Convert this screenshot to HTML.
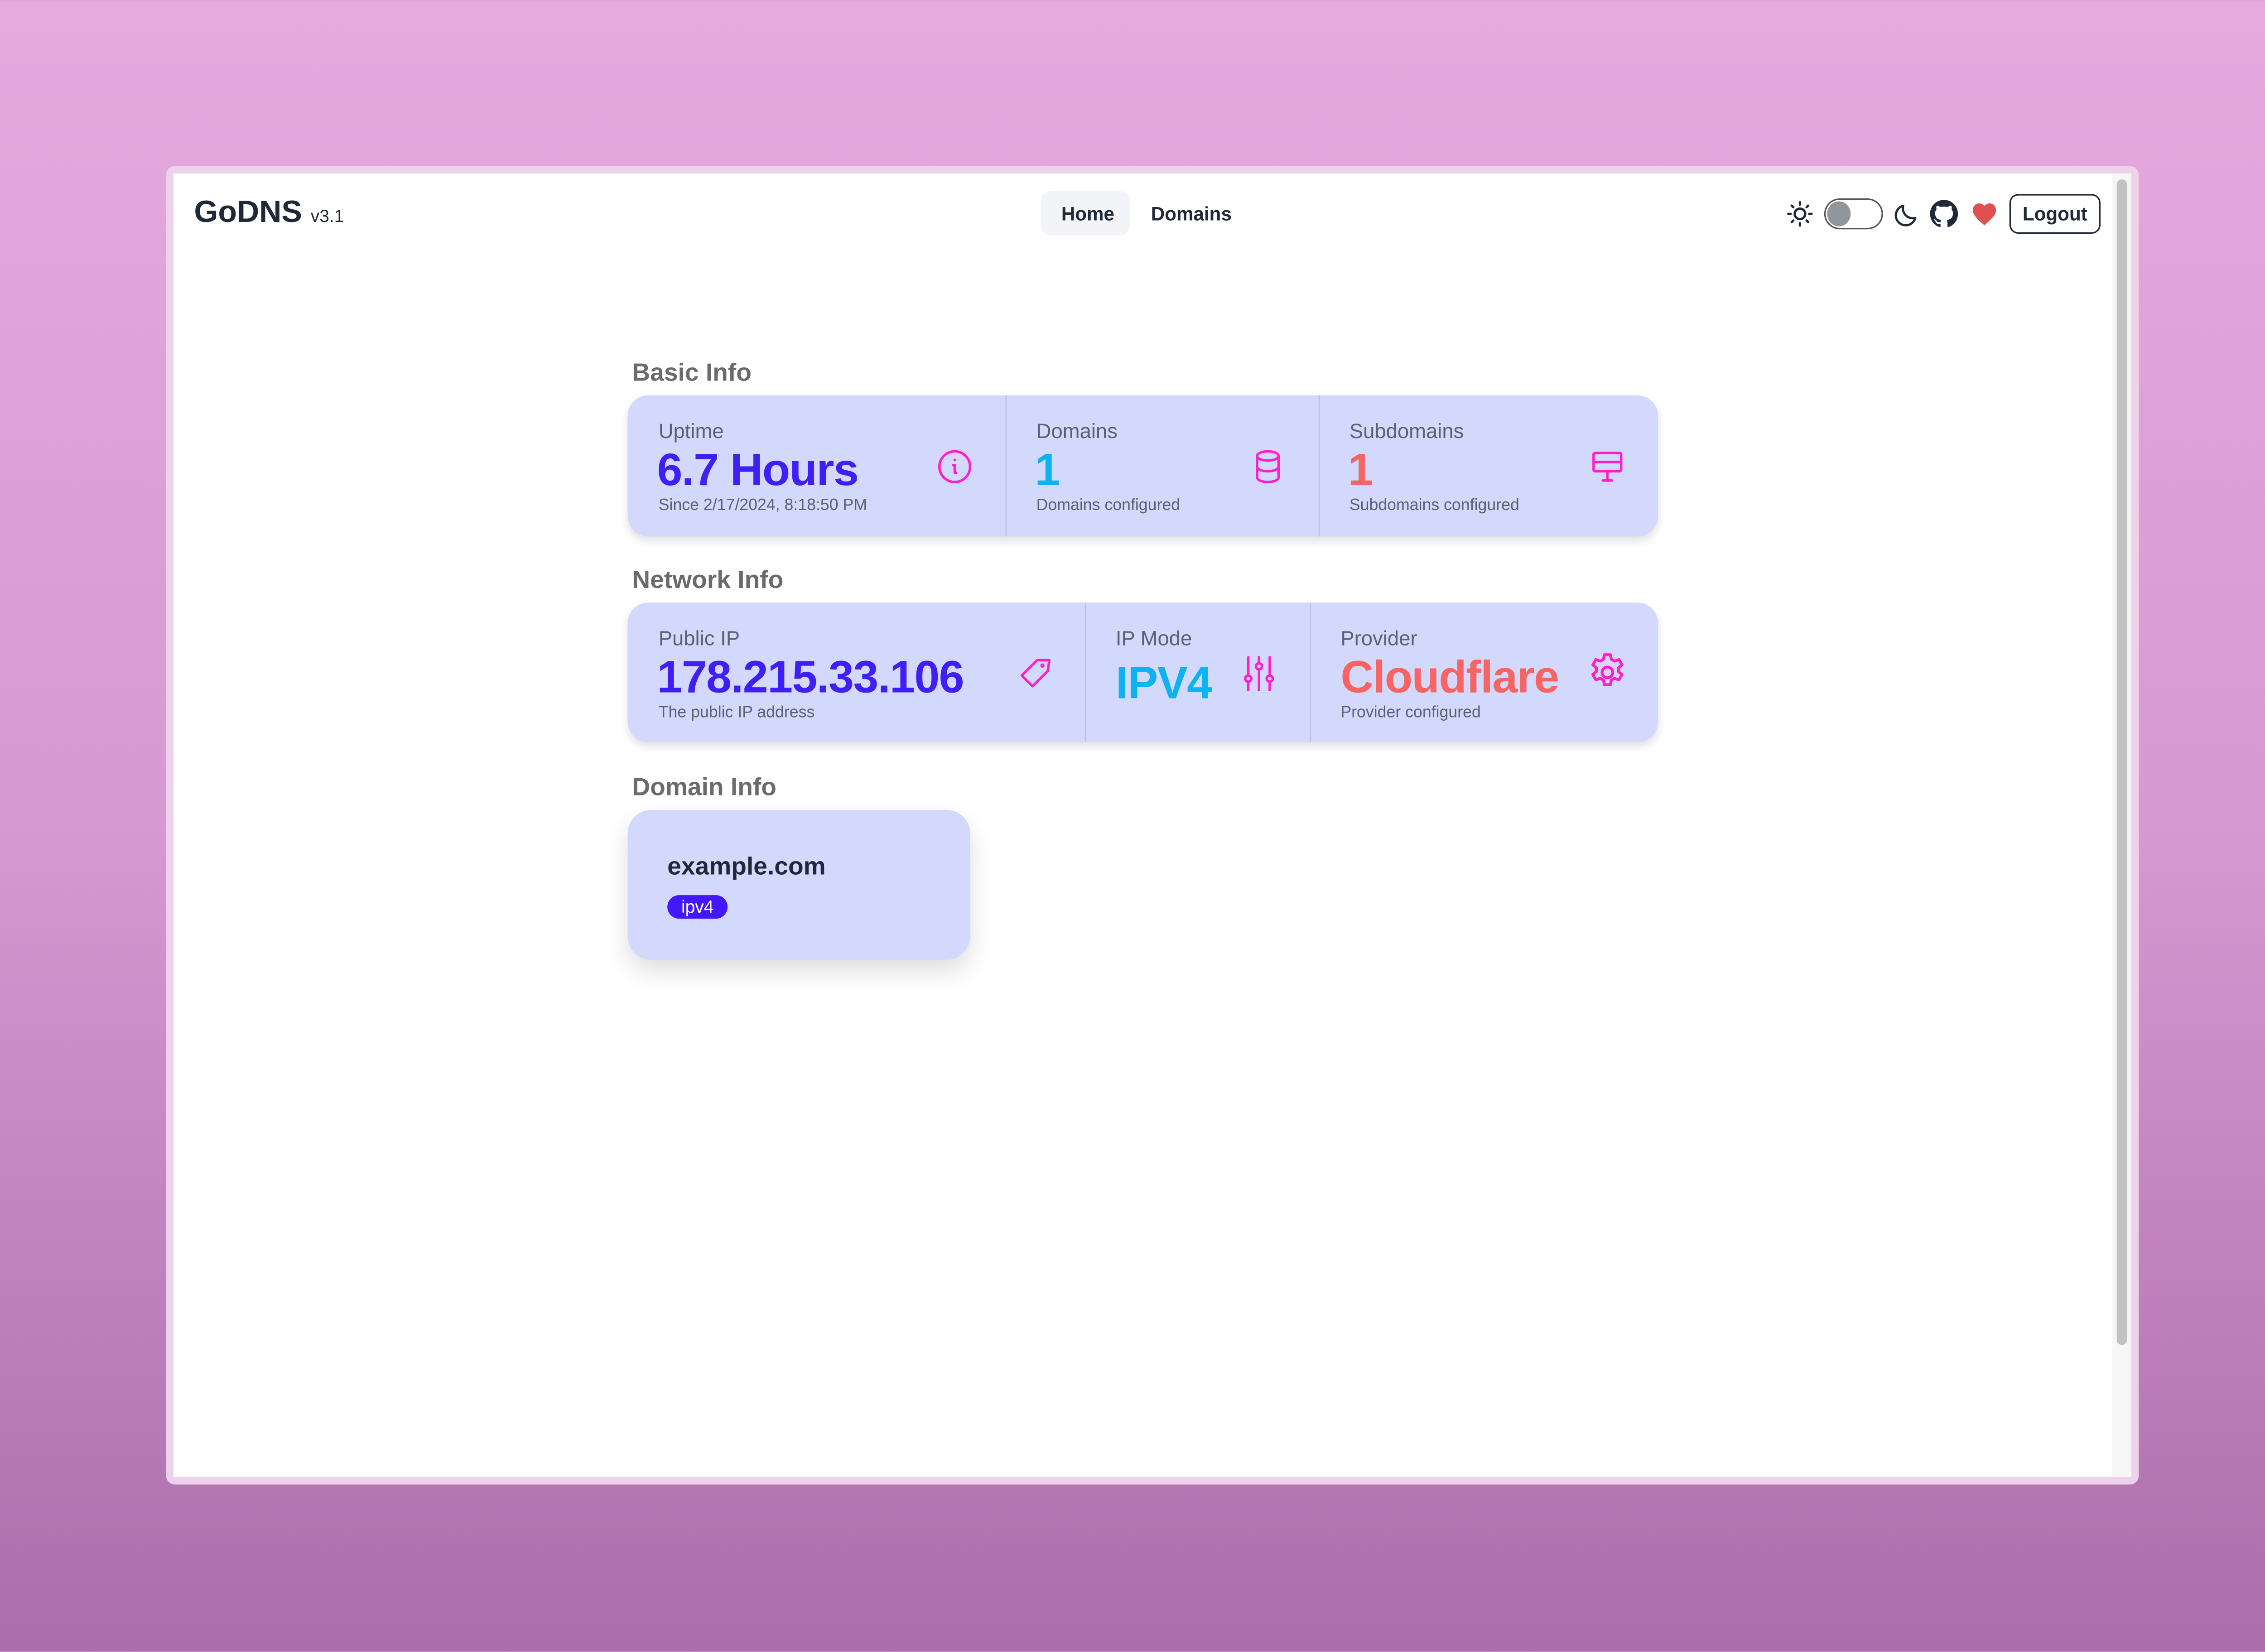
<!DOCTYPE html>
<html><head><meta charset="utf-8"><style>
html,body{margin:0;padding:0;width:5088px;height:3646px;overflow:hidden;}
body{background:linear-gradient(180deg,#e6aadf 0%,#d699d1 50%,#ad6dad 100%);font-family:"Liberation Sans",sans-serif;}
#s{position:absolute;left:0;top:0;width:1568px;height:1124px;transform:scale(3.2449);transform-origin:0 0;}
.frame{position:absolute;left:113px;top:113px;width:1342px;height:897px;background:#ecd2ea;border-radius:6px;}
.win{position:absolute;left:118px;top:118px;width:1319px;height:887px;background:#fff;}
.sb{position:absolute;left:1437px;top:118px;width:13px;height:887px;background:#f6f6f6;}
.thumb{position:absolute;left:1440px;top:122px;width:7px;height:793px;background:#c2c2c2;border-radius:4px;}
.a{position:absolute;}
.lbl{position:absolute;font-size:17px;font-weight:bold;color:#6b6b6b;}
.card{position:absolute;background:#d3d9fd;border-radius:14px;box-shadow:0 3px 6px rgba(0,0,0,.12);}
.div{position:absolute;top:0;bottom:0;width:1px;background:#bfc5e6;}
.t{position:absolute;font-size:14px;color:#5c6170;}
.v{position:absolute;font-size:31px;font-weight:bold;letter-spacing:-0.5px;}
.d{position:absolute;font-size:11px;color:#5c6170;}
svg.ic{position:absolute;fill:none;stroke:#ff1fc8;stroke-width:1.6;stroke-linecap:round;stroke-linejoin:round;}
</style></head><body><div id="s">
<div class="frame"></div><div class="win"></div><div class="sb"></div><div class="thumb"></div>

<div class="a" style="left:132px;top:133px;font-size:21px;font-weight:bold;color:#1f2937;">GoDNS <span style="font-size:12px;font-weight:normal;">v3.1</span></div>
<div class="a" style="left:708px;top:130px;width:61px;height:30px;background:#f2f4f8;border-radius:7px;"></div>
<div class="a" style="left:722px;top:138px;font-size:13px;font-weight:bold;color:#1f2937;">Home</div>
<div class="a" style="left:783px;top:138px;font-size:13px;font-weight:bold;color:#1f2937;">Domains</div>

<svg class="a" style="left:1215px;top:136px" width="19" height="19" viewBox="0 0 24 24" fill="none" stroke="#1f2937" stroke-width="2" stroke-linecap="round"><circle cx="12" cy="12" r="4.5"/><path d="M12 2v2M12 20v2M2 12h2M20 12h2M4.9 4.9l1.4 1.4M17.7 17.7l1.4 1.4M4.9 19.1l1.4-1.4M17.7 6.3l1.4-1.4"/></svg>
<div class="a" style="left:1241px;top:135px;width:38px;height:19px;border:1.5px solid #555;border-radius:11px;"></div>
<div class="a" style="left:1243px;top:137px;width:16px;height:17px;background:#91959c;border-radius:50%;"></div>
<svg class="a" style="left:1288px;top:137px" width="18" height="18" viewBox="0 0 24 24" fill="none" stroke="#1f2937" stroke-width="2" stroke-linecap="round" stroke-linejoin="round"><path d="M20 15A9 9 0 0 1 9 4a9 9 0 1 0 11 11z"/></svg>
<svg class="a" style="left:1313px;top:136px" width="19" height="19" viewBox="0 0 16 16" fill="#1f2937"><path d="M8 0C3.58 0 0 3.58 0 8c0 3.54 2.29 6.53 5.47 7.59.4.07.55-.17.55-.38 0-.19-.01-.82-.01-1.49-2.01.37-2.53-.49-2.69-.94-.09-.23-.48-.94-.82-1.13-.28-.15-.68-.52-.01-.53.63-.01 1.08.58 1.23.82.72 1.21 1.87.87 2.33.66.07-.52.28-.87.51-1.07-1.780-.2-3.64-.89-3.64-3.95 0-.87.31-1.59.82-2.15-.08-.2-.36-1.02.08-2.12 0 0 .67-.21 2.2.82.64-.18 1.32-.27 2-.27.68 0 1.36.09 2 .27 1.53-1.04 2.2-.82 2.2-.82.44 1.1.16 1.92.08 2.12.51.56.82 1.27.82 2.15 0 3.07-1.87 3.75-3.65 3.95.29.25.54.73.54 1.48 0 1.07-.01 1.93-.01 2.2 0 .21.15.46.55.38A8.013 8.013 0 0016 8c0-4.42-3.58-8-8-8z"/></svg>
<svg class="a" style="left:1341px;top:137px" width="18" height="17" viewBox="0 0 24 22" fill="#e0504e"><path d="M12 21.5 10.5 20C5 15 1.5 12 1.5 7.5 1.5 4 4 1.5 7.3 1.5c1.9 0 3.6.9 4.7 2.3 1.1-1.4 2.8-2.3 4.7-2.3C20 1.5 22.5 4 22.5 7.5c0 4.5-3.5 7.5-9 12.5z"/></svg>
<div class="a" style="left:1367px;top:132px;width:60px;height:25px;border:1.5px solid #1f2937;border-radius:6px;font-size:13px;font-weight:bold;color:#1f2937;text-align:center;line-height:25px;">Logout</div>

<div class="lbl" style="left:430px;top:244px;">Basic Info</div>
<div class="card" style="left:427px;top:269px;width:701px;height:96px;">
 <div class="div" style="left:257px"></div><div class="div" style="left:470px"></div>
</div>
<div class="t" style="left:448px;top:285px;">Uptime</div>
<div class="v" style="left:447px;top:302px;color:#3f1ff3;">6.7 Hours</div>
<div class="d" style="left:448px;top:338px;">Since 2/17/2024, 8:18:50 PM</div>
<svg class="ic" style="left:637px;top:305px" width="25" height="25" viewBox="0 0 24 24"><circle cx="12" cy="12" r="10"/><path d="M11 11h1v5h1M12 7.5v.2"/></svg>
<div class="t" style="left:705px;top:285px;">Domains</div>
<div class="v" style="left:704px;top:302px;color:#0bb3f2;">1</div>
<div class="d" style="left:705px;top:338px;">Domains configured</div>
<svg class="ic" style="left:850px;top:305px" width="25" height="25" viewBox="0 0 24 24"><ellipse cx="12" cy="5" rx="7" ry="3"/><path d="M5 5v14c0 1.7 3.1 3 7 3s7-1.3 7-3V5M5 12c0 1.7 3.1 3 7 3s7-1.3 7-3"/></svg>
<div class="t" style="left:918px;top:285px;">Subdomains</div>
<div class="v" style="left:917px;top:302px;color:#f86464;">1</div>
<div class="d" style="left:918px;top:338px;">Subdomains configured</div>
<svg class="ic" style="left:1081px;top:305px" width="25" height="25" viewBox="0 0 24 24"><rect x="3" y="3" width="18" height="12" rx="1"/><path d="M3 9h18M12 15v5M9 21h6"/></svg>

<div class="lbl" style="left:430px;top:385px;">Network Info</div>
<div class="card" style="left:427px;top:410px;width:701px;height:95px;">
 <div class="div" style="left:311px"></div><div class="div" style="left:464px"></div>
</div>
<div class="t" style="left:448px;top:426px;">Public IP</div>
<div class="v" style="left:447px;top:443px;color:#3f1ff3;">178.215.33.106</div>
<div class="d" style="left:448px;top:479px;">The public IP address</div>
<svg class="ic" style="left:692px;top:445px" width="25" height="25" viewBox="0 0 24 24"><path d="M21 4 20 11 10 21 3 14 13 4z"/><circle cx="16.5" cy="7.5" r=".6"/></svg>
<div class="t" style="left:759px;top:426px;">IP Mode</div>
<div class="v" style="left:759px;top:447px;color:#0bb3f2;">IPV4</div>
<svg class="ic" style="left:844px;top:445px" width="25" height="25" viewBox="0 0 24 24"><path d="M5 2v22M12 2v22M19 2v22"/><circle cx="5" cy="16" r="2" fill="#d3d9fd"/><circle cx="12" cy="8" r="2" fill="#d3d9fd"/><circle cx="19" cy="16" r="2" fill="#d3d9fd"/></svg>
<div class="t" style="left:912px;top:426px;">Provider</div>
<div class="v" style="left:912px;top:443px;color:#f86464;">Cloudflare</div>
<div class="d" style="left:912px;top:479px;">Provider configured</div>
<svg class="ic" style="left:1079px;top:443px" width="29" height="29" viewBox="0 0 24 24"><path d="M10.3 2h3.4l.5 2.6 1.8 1 2.5-.9 1.7 3-2 1.7v2.1l2 1.7-1.7 3-2.5-.9-1.8 1-.5 2.6h-3.4l-.5-2.6-1.8-1-2.5.9-1.7-3 2-1.7v-2.1l-2-1.7 1.7-3 2.5.9 1.8-1z"/><circle cx="12" cy="12" r="3"/></svg>

<div class="lbl" style="left:430px;top:526px;">Domain Info</div>
<div class="card" style="left:427px;top:551px;width:233px;height:102px;border-radius:16px;box-shadow:0 8px 16px rgba(0,0,0,.13);"></div>
<div class="a" style="left:454px;top:580px;font-size:17px;font-weight:bold;color:#1f2937;">example.com</div>
<div class="a" style="left:454px;top:609px;width:41px;height:16px;background:#4318ff;border-radius:8px;color:#fff;font-size:12px;text-align:center;line-height:16px;">ipv4</div>
</div></body></html>
